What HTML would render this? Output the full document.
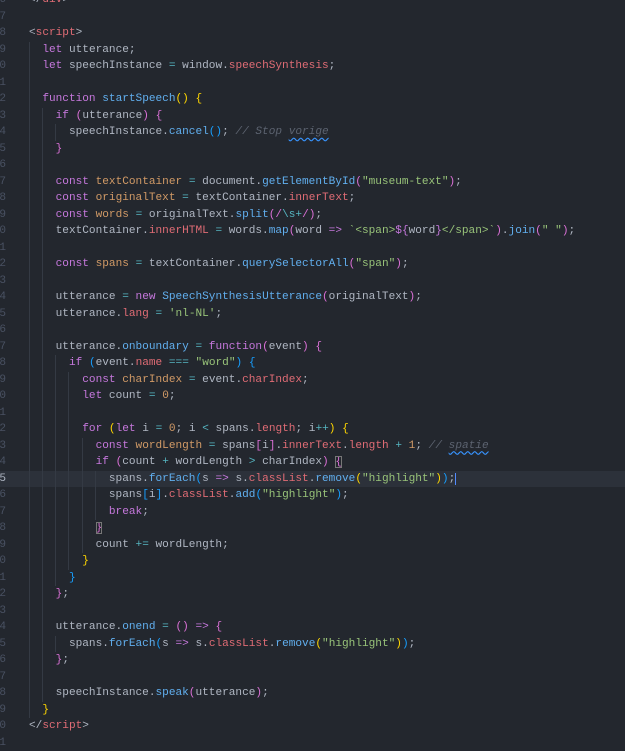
<!DOCTYPE html>
<html><head><meta charset="utf-8"><style>
html,body{margin:0;padding:0;background:#23272e;width:625px;height:739px;overflow:hidden}
#ed{position:absolute;left:0;top:-8px;width:625px;font-family:"Liberation Mono",monospace;font-size:11.1px;color:#b0b7c3}
.l{position:relative;height:16.5px;line-height:16.5px;white-space:pre}
.n{position:absolute;left:-4px;width:10px;text-align:right;color:#495162}
.c{position:absolute;left:29px;top:0}
.cur{background:#2c313a}
.g{position:absolute;top:0;width:1px;height:16.5px;background:#343a44}
.k{color:#c678dd}.f{color:#61afef}.p{color:#e06c75}.s{color:#98c379}.o{color:#d19a66}.m{color:#5c6370;font-style:italic}.t{color:#e06c75}.op{color:#56b6c2}
.b1{color:#ffd700}.b2{color:#da70d6}.b3{color:#179fff}
.sq{text-decoration:underline wavy #3794ff;text-underline-offset:3px}
.bx{outline:1px solid #777;outline-offset:-1px}
.caret{border-right:1px solid #528bff}
</style></head><body><div id="ed">
<div class="l"><span class="n">6</span><span class="c"><span class="t" style="color:#abb2bf">&lt;/</span><span class="t">div</span>&gt;</span></div>
<div class="l"><span class="n">7</span></div>
<div class="l"><span class="n">8</span><span class="c"><span class="t" style="color:#abb2bf">&lt;</span><span class="t">script</span>&gt;</span></div>
<div class="l"><span class="n">9</span><i class="g" style="left:29px"></i><span class="c">  <span class="k">let</span> utterance;</span></div>
<div class="l"><span class="n">0</span><i class="g" style="left:29px"></i><span class="c">  <span class="k">let</span> speechInstance <span class="op">=</span> window.<span class="p">speechSynthesis</span>;</span></div>
<div class="l"><span class="n">1</span><i class="g" style="left:29px"></i></div>
<div class="l"><span class="n">2</span><i class="g" style="left:29px"></i><span class="c">  <span class="k">function</span> <span class="f">startSpeech</span><span class="b1">()</span> <span class="b1">{</span></span></div>
<div class="l"><span class="n">3</span><i class="g" style="left:29px"></i><i class="g" style="left:42px"></i><span class="c">    <span class="k">if</span> <span class="b2">(</span>utterance<span class="b2">)</span> <span class="b2">{</span></span></div>
<div class="l"><span class="n">4</span><i class="g" style="left:29px"></i><i class="g" style="left:42px"></i><i class="g" style="left:55px"></i><span class="c">      speechInstance.<span class="f">cancel</span><span class="b3">()</span>; <span class="m">// Stop <span class="sq">vorige</span></span></span></div>
<div class="l"><span class="n">5</span><i class="g" style="left:29px"></i><i class="g" style="left:42px"></i><span class="c">    <span class="b2">}</span></span></div>
<div class="l"><span class="n">6</span><i class="g" style="left:29px"></i><i class="g" style="left:42px"></i></div>
<div class="l"><span class="n">7</span><i class="g" style="left:29px"></i><i class="g" style="left:42px"></i><span class="c">    <span class="k">const</span> <span class="o">textContainer</span> <span class="op">=</span> document.<span class="f">getElementById</span><span class="b2">(</span><span class="s">"museum-text"</span><span class="b2">)</span>;</span></div>
<div class="l"><span class="n">8</span><i class="g" style="left:29px"></i><i class="g" style="left:42px"></i><span class="c">    <span class="k">const</span> <span class="o">originalText</span> <span class="op">=</span> textContainer.<span class="p">innerText</span>;</span></div>
<div class="l"><span class="n">9</span><i class="g" style="left:29px"></i><i class="g" style="left:42px"></i><span class="c">    <span class="k">const</span> <span class="o">words</span> <span class="op">=</span> originalText.<span class="f">split</span><span class="b2">(</span><span class="b2">/</span><span class="op">\s+</span><span class="b2">/</span><span class="b2">)</span>;</span></div>
<div class="l"><span class="n">0</span><i class="g" style="left:29px"></i><i class="g" style="left:42px"></i><span class="c">    textContainer.<span class="p">innerHTML</span> <span class="op">=</span> words.<span class="f">map</span><span class="b2">(</span>word <span class="k">=&gt;</span> <span class="s">`&lt;span&gt;</span><span class="k">${</span>word<span class="k">}</span><span class="s">&lt;/span&gt;`</span><span class="b2">)</span>.<span class="f">join</span><span class="b2">(</span><span class="s">" "</span><span class="b2">)</span>;</span></div>
<div class="l"><span class="n">1</span><i class="g" style="left:29px"></i><i class="g" style="left:42px"></i></div>
<div class="l"><span class="n">2</span><i class="g" style="left:29px"></i><i class="g" style="left:42px"></i><span class="c">    <span class="k">const</span> <span class="o">spans</span> <span class="op">=</span> textContainer.<span class="f">querySelectorAll</span><span class="b2">(</span><span class="s">"span"</span><span class="b2">)</span>;</span></div>
<div class="l"><span class="n">3</span><i class="g" style="left:29px"></i><i class="g" style="left:42px"></i></div>
<div class="l"><span class="n">4</span><i class="g" style="left:29px"></i><i class="g" style="left:42px"></i><span class="c">    utterance <span class="op">=</span> <span class="k">new</span> <span class="f">SpeechSynthesisUtterance</span><span class="b2">(</span>originalText<span class="b2">)</span>;</span></div>
<div class="l"><span class="n">5</span><i class="g" style="left:29px"></i><i class="g" style="left:42px"></i><span class="c">    utterance.<span class="p">lang</span> <span class="op">=</span> <span class="s">'nl-NL'</span>;</span></div>
<div class="l"><span class="n">6</span><i class="g" style="left:29px"></i><i class="g" style="left:42px"></i></div>
<div class="l"><span class="n">7</span><i class="g" style="left:29px"></i><i class="g" style="left:42px"></i><span class="c">    utterance.<span class="f">onboundary</span> <span class="op">=</span> <span class="k">function</span><span class="b2">(</span>event<span class="b2">)</span> <span class="b2">{</span></span></div>
<div class="l"><span class="n">8</span><i class="g" style="left:29px"></i><i class="g" style="left:42px"></i><i class="g" style="left:55px"></i><span class="c">      <span class="k">if</span> <span class="b3">(</span>event.<span class="p">name</span> <span class="op">===</span> <span class="s">"word"</span><span class="b3">)</span> <span class="b3">{</span></span></div>
<div class="l"><span class="n">9</span><i class="g" style="left:29px"></i><i class="g" style="left:42px"></i><i class="g" style="left:55px"></i><i class="g" style="left:68px"></i><span class="c">        <span class="k">const</span> <span class="o">charIndex</span> <span class="op">=</span> event.<span class="p">charIndex</span>;</span></div>
<div class="l"><span class="n">0</span><i class="g" style="left:29px"></i><i class="g" style="left:42px"></i><i class="g" style="left:55px"></i><i class="g" style="left:68px"></i><span class="c">        <span class="k">let</span> count <span class="op">=</span> <span class="o">0</span>;</span></div>
<div class="l"><span class="n">1</span><i class="g" style="left:29px"></i><i class="g" style="left:42px"></i><i class="g" style="left:55px"></i><i class="g" style="left:68px"></i></div>
<div class="l"><span class="n">2</span><i class="g" style="left:29px"></i><i class="g" style="left:42px"></i><i class="g" style="left:55px"></i><i class="g" style="left:68px"></i><span class="c">        <span class="k">for</span> <span class="b1">(</span><span class="k">let</span> i <span class="op">=</span> <span class="o">0</span>; i <span class="op">&lt;</span> spans.<span class="p">length</span>; i<span class="op">++</span><span class="b1">)</span> <span class="b1">{</span></span></div>
<div class="l"><span class="n">3</span><i class="g" style="left:29px"></i><i class="g" style="left:42px"></i><i class="g" style="left:55px"></i><i class="g" style="left:68px"></i><i class="g" style="left:82px"></i><span class="c">          <span class="k">const</span> <span class="o">wordLength</span> <span class="op">=</span> spans<span class="b2">[</span>i<span class="b2">]</span>.<span class="p">innerText</span>.<span class="p">length</span> <span class="op">+</span> <span class="o">1</span>; <span class="m">// <span class="sq">spatie</span></span></span></div>
<div class="l"><span class="n">4</span><i class="g" style="left:29px"></i><i class="g" style="left:42px"></i><i class="g" style="left:55px"></i><i class="g" style="left:68px"></i><i class="g" style="left:82px"></i><span class="c">          <span class="k">if</span> <span class="b2">(</span>count <span class="op">+</span> wordLength <span class="op">&gt;</span> charIndex<span class="b2">)</span> <span class="b2 bx">{</span></span></div>
<div class="l cur"><span class="n" style="color:#abb2bf">5</span><i class="g" style="left:29px"></i><i class="g" style="left:42px"></i><i class="g" style="left:55px"></i><i class="g" style="left:68px"></i><i class="g" style="left:82px"></i><i class="g" style="left:95px"></i><span class="c">            spans.<span class="f">forEach</span><span class="b3">(</span>s <span class="k">=&gt;</span> s.<span class="p">classList</span>.<span class="f">remove</span><span class="b1">(</span><span class="s">"highlight"</span><span class="b1">)</span><span class="b3">)</span><span class="caret">;</span></span></div>
<div class="l"><span class="n">6</span><i class="g" style="left:29px"></i><i class="g" style="left:42px"></i><i class="g" style="left:55px"></i><i class="g" style="left:68px"></i><i class="g" style="left:82px"></i><i class="g" style="left:95px"></i><span class="c">            spans<span class="b3">[</span>i<span class="b3">]</span>.<span class="p">classList</span>.<span class="f">add</span><span class="b3">(</span><span class="s">"highlight"</span><span class="b3">)</span>;</span></div>
<div class="l"><span class="n">7</span><i class="g" style="left:29px"></i><i class="g" style="left:42px"></i><i class="g" style="left:55px"></i><i class="g" style="left:68px"></i><i class="g" style="left:82px"></i><i class="g" style="left:95px"></i><span class="c">            <span class="k">break</span>;</span></div>
<div class="l"><span class="n">8</span><i class="g" style="left:29px"></i><i class="g" style="left:42px"></i><i class="g" style="left:55px"></i><i class="g" style="left:68px"></i><i class="g" style="left:82px"></i><span class="c">          <span class="b2 bx">}</span></span></div>
<div class="l"><span class="n">9</span><i class="g" style="left:29px"></i><i class="g" style="left:42px"></i><i class="g" style="left:55px"></i><i class="g" style="left:68px"></i><i class="g" style="left:82px"></i><span class="c">          count <span class="op">+=</span> wordLength;</span></div>
<div class="l"><span class="n">0</span><i class="g" style="left:29px"></i><i class="g" style="left:42px"></i><i class="g" style="left:55px"></i><i class="g" style="left:68px"></i><span class="c">        <span class="b1">}</span></span></div>
<div class="l"><span class="n">1</span><i class="g" style="left:29px"></i><i class="g" style="left:42px"></i><i class="g" style="left:55px"></i><span class="c">      <span class="b3">}</span></span></div>
<div class="l"><span class="n">2</span><i class="g" style="left:29px"></i><i class="g" style="left:42px"></i><span class="c">    <span class="b2">}</span>;</span></div>
<div class="l"><span class="n">3</span><i class="g" style="left:29px"></i><i class="g" style="left:42px"></i></div>
<div class="l"><span class="n">4</span><i class="g" style="left:29px"></i><i class="g" style="left:42px"></i><span class="c">    utterance.<span class="f">onend</span> <span class="op">=</span> <span class="b2">()</span> <span class="k">=&gt;</span> <span class="b2">{</span></span></div>
<div class="l"><span class="n">5</span><i class="g" style="left:29px"></i><i class="g" style="left:42px"></i><i class="g" style="left:55px"></i><span class="c">      spans.<span class="f">forEach</span><span class="b3">(</span>s <span class="k">=&gt;</span> s.<span class="p">classList</span>.<span class="f">remove</span><span class="b1">(</span><span class="s">"highlight"</span><span class="b1">)</span><span class="b3">)</span>;</span></div>
<div class="l"><span class="n">6</span><i class="g" style="left:29px"></i><i class="g" style="left:42px"></i><span class="c">    <span class="b2">}</span>;</span></div>
<div class="l"><span class="n">7</span><i class="g" style="left:29px"></i><i class="g" style="left:42px"></i></div>
<div class="l"><span class="n">8</span><i class="g" style="left:29px"></i><i class="g" style="left:42px"></i><span class="c">    speechInstance.<span class="f">speak</span><span class="b2">(</span>utterance<span class="b2">)</span>;</span></div>
<div class="l"><span class="n">9</span><i class="g" style="left:29px"></i><span class="c">  <span class="b1">}</span></span></div>
<div class="l"><span class="n">0</span><span class="c">&lt;/<span class="t">script</span>&gt;</span></div>
<div class="l"><span class="n">1</span></div>
</div></body></html>
